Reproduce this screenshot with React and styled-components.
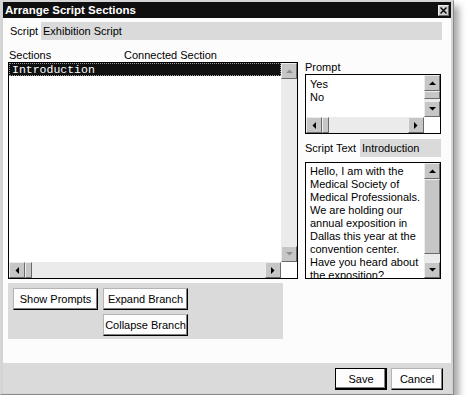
import React from 'react';
import styled, { createGlobalStyle } from 'styled-components';

const GlobalStyle = createGlobalStyle`
  html, body {
    margin: 0;
    padding: 0;
    background: #fff;
  }
  body {
    font-family: 'Liberation Sans', Arial, sans-serif;
    font-size: 11px;
    color: #000;
  }
`;

const hatch = `
  background: #dadada;
`;

const dots = `
  background: #ebebeb;
`;

const raised = `
  background: #c6c6c6;
  border: 1px solid;
  border-color: #ededed #6a6a6a #6a6a6a #ededed;
  box-sizing: border-box;
`;

const Window = styled.div`
  width: 454px;
  height: 395px;
  box-sizing: border-box;
  border: 1px solid;
  border-color: #d6d6d6 #8a8a8a #8a8a8a #d6d6d6;
  padding: 1px 2px;
  background: #d4d4d4;
  box-shadow: 5px 6px 7px rgba(0, 0, 0, 0.35);
  display: flex;
  flex-direction: column;
`;

const TitleBar = styled.div`
  height: 16px;
  flex: none;
  background: #0f0f0f;
  display: flex;
  align-items: center;
  justify-content: space-between;
  padding: 0 2px 0 2px;
`;

const TitleText = styled.span`
  color: #fff;
  font-weight: bold;
  font-size: 11.5px;
  line-height: 16px;
`;

const CloseButton = styled.div`
  ${raised}
  width: 11px;
  height: 11px;
  background: #cfcfcf;
  display: flex;
  align-items: center;
  justify-content: center;
`;

const Body = styled.div`
  flex: 1;
  min-height: 0;
  background: #fcfcfc;
  padding: 4px 9px 0 5px;
  display: flex;
  flex-direction: column;
`;

const FieldRow = styled.div`
  display: flex;
  height: 18px;
  align-items: center;
  margin-top: ${p => p.$gap || 0}px;
`;

const FieldLabel = styled.span`
  width: ${p => p.$width}px;
  padding-left: ${p => p.$indent || 0}px;
  box-sizing: border-box;
  line-height: 18px;
  flex: none;
`;

const FieldValue = styled.div`
  ${hatch}
  flex: 1;
  height: 18px;
  line-height: 18px;
  padding-left: 2px;
`;

const Content = styled.div`
  display: grid;
  grid-template-columns: 290px 136px;
  column-gap: 7px;
`;

const Column = styled.div`
  display: flex;
  flex-direction: column;
  padding-top: ${p => p.$top || 0}px;
`;

const Header = styled.div`
  display: flex;
  height: 22px;
  box-sizing: border-box;
  padding-top: 8px;
  line-height: 14px;
`;

const HeaderLabel = styled.span`
  width: ${p => p.$width ? `${p.$width}px` : 'auto'};
  padding-left: 1px;
`;

const Label = styled.div`
  line-height: 14px;
`;

const ListBox = styled.div`
  height: ${p => p.$height}px;
  box-sizing: border-box;
  border: 1px solid #000;
  background: #fff;
  display: grid;
  grid-template-columns: 1fr 16px;
  grid-template-rows: ${p => p.$noHorizontal ? '1fr' : '1fr 16px'};
  overflow: hidden;
  margin-top: ${p => p.$gap || 0}px;
`;

const ListItems = styled.div`
  overflow: hidden;
  padding-top: ${p => p.$pad || 0}px;
  padding-left: ${p => p.$left || 0}px;
  line-height: 13px;
`;

const SelectedItem = styled.div`
  height: 13px;
  background: #101010;
  color: #fff;
  font-family: 'Liberation Mono', 'Courier New', monospace;
  font-size: 11.5px;
  line-height: 13px;
  padding-left: 3px;
  outline: 1px dotted #9a9a9a;
  outline-offset: -1px;
`;

const ScrollV = styled.div`
  display: flex;
  flex-direction: column;
  min-height: 0;
`;

const ScrollH = styled.div`
  display: flex;
  height: 16px;
`;

const ArrowButton = styled.div`
  ${raised}
  width: 16px;
  height: 16px;
  flex: none;
  display: flex;
  align-items: center;
  justify-content: center;
`;

const Thumb = styled.div`
  ${raised}
  flex: none;
  ${p => p.$vertical ? `height: ${p.$size}px;` : `width: ${p.$size}px;`}
`;

const Track = styled.div`
  ${dots}
  flex: 1;
`;

const Corner = styled.div`
  background: #fff;
`;

const Panel = styled.div`
  ${hatch}
  width: 275px;
  height: 56px;
  box-sizing: border-box;
  margin-top: 4px;
  padding: 5px;
  display: grid;
  grid-template-columns: 85px 85px;
  grid-auto-rows: 22px;
  gap: 4px 5px;
`;

const Button = styled.button`
  height: 22px;
  width: ${p => p.$width ? `${p.$width}px` : 'auto'};
  grid-column: ${p => p.$col || 'auto'};
  box-sizing: border-box;
  padding: 0;
  font-family: 'Liberation Sans', Arial, sans-serif;
  font-size: 11px;
  color: #000;
  background: #fdfdfd;
  border: 1px solid;
  border-color: ${p => p.$default ? '#000' : '#b4b4b4 #000 #000 #b4b4b4'};
  box-shadow: ${p => p.$default
    ? 'inset -1px -1px #000, inset -2px -2px #808080'
    : 'inset -1px -1px #808080'};
`;

const Footer = styled.div`
  ${hatch}
  height: 30px;
  flex: none;
  box-sizing: border-box;
  padding: 5px 8px 0 0;
  display: flex;
  justify-content: flex-end;
  gap: 4px;
`;

const TextLines = styled.div`
  overflow: hidden;
  padding: 2px 0 0 4px;
  line-height: 13px;
  white-space: nowrap;
`;

function Arrow({ dir, disabled }) {
  const pts = {
    up: '0,4 3.5,0.5 7,4',
    down: '0,0 7,0 3.5,3.5',
    left: '4,0 4,7 0.5,3.5',
    right: '0,0 0,7 3.5,3.5',
  }[dir];
  const horizontal = dir === 'left' || dir === 'right';
  return (
    <svg width={horizontal ? 4 : 7} height={horizontal ? 7 : 4} viewBox={horizontal ? '0 0 4 7' : '0 0 7 4'}>
      <polygon points={pts} fill={disabled ? '#8e8e8e' : '#000'} />
    </svg>
  );
}

function VScroll({ thumb, disabled }) {
  return (
    <ScrollV>
      <ArrowButton><Arrow dir="up" disabled={disabled} /></ArrowButton>
      {thumb ? <Thumb $vertical $size={thumb} /> : null}
      <Track />
      <ArrowButton><Arrow dir="down" disabled={disabled} /></ArrowButton>
    </ScrollV>
  );
}

function HScroll() {
  return (
    <ScrollH>
      <ArrowButton><Arrow dir="left" /></ArrowButton>
      <Thumb $size={7} />
      <Track />
      <ArrowButton><Arrow dir="right" /></ArrowButton>
    </ScrollH>
  );
}

const scriptText = [
  'Hello, I am with the',
  'Medical Society of',
  'Medical Professionals.',
  'We are holding our',
  'annual exposition in',
  'Dallas this year at the',
  'convention center.',
  'Have you heard about',
  'the exposition?',
];

export default function App() {
  return (
    <>
      <GlobalStyle />
      <Window>
        <TitleBar>
          <TitleText>Arrange Script Sections</TitleText>
          <CloseButton>
            <svg width="7" height="7" viewBox="0 0 7 7">
              <path d="M0.5 0.5 L6.5 6.5 M6.5 0.5 L0.5 6.5" stroke="#000" strokeWidth="1.4" />
            </svg>
          </CloseButton>
        </TitleBar>
        <Body>
          <FieldRow>
            <FieldLabel $width={33} $indent={2}>Script</FieldLabel>
            <FieldValue>Exhibition Script</FieldValue>
          </FieldRow>
          <Content>
            <Column>
              <Header>
                <HeaderLabel $width={114}>Sections</HeaderLabel>
                <HeaderLabel>Connected Section</HeaderLabel>
              </Header>
              <ListBox $height={217}>
                <ListItems>
                  <SelectedItem>Introduction</SelectedItem>
                </ListItems>
                <VScroll disabled />
                <HScroll />
                <Corner />
              </ListBox>
              <Panel>
                <Button>Show Prompts</Button>
                <Button>Expand Branch</Button>
                <Button $col="2">Collapse Branch</Button>
              </Panel>
            </Column>
            <Column $top={20}>
              <Label>Prompt</Label>
              <ListBox $height={60}>
                <ListItems $pad={3} $left={4}>
                  <div>Yes</div>
                  <div>No</div>
                </ListItems>
                <VScroll thumb={8} />
                <HScroll />
                <Corner />
              </ListBox>
              <FieldRow $gap={5}>
                <FieldLabel $width={55}>Script Text</FieldLabel>
                <FieldValue>Introduction</FieldValue>
              </FieldRow>
              <ListBox $height={117} $gap={5} $noHorizontal>
                <TextLines>
                  {scriptText.map(line => <div key={line}>{line}</div>)}
                </TextLines>
                <VScroll thumb={75} />
              </ListBox>
            </Column>
          </Content>
        </Body>
        <Footer>
          <Button $width={52} $default>Save</Button>
          <Button $width={52}>Cancel</Button>
        </Footer>
      </Window>
    </>
  );
}
